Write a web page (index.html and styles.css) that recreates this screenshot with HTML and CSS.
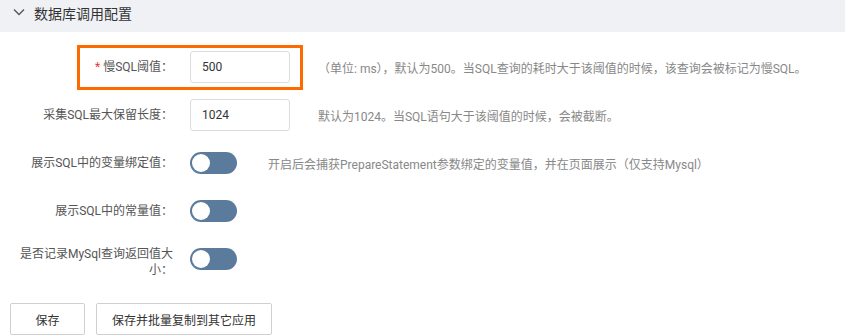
FILE: index.html
```html
<!DOCTYPE html>
<html lang="zh-CN">
<head>
<meta charset="utf-8">
<link rel="stylesheet" href="styles.css">
</head>
<body>
<div class="panel">
  <div class="panel-head">
    <svg class="chevron" width="12" height="8" viewBox="0 0 12 8"><path d="M1 1.5 L6 6.5 L11 1.5" fill="none" stroke="#555" stroke-width="1.3"/></svg>
    <span class="title">数据库调用配置</span>
  </div>
  <div class="form">
    <div class="row">
      <span class="highlight"></span>
      <label class="label"><span class="req">*</span> 慢SQL阈值：</label>
      <div class="control"><input class="input" value="500"></div>
      <span class="desc">（单位: ms），默认为500。当SQL查询的耗时大于该阈值的时候，该查询会被标记为慢SQL。</span>
    </div>
    <div class="row">
      <label class="label">采集SQL最大保留长度：</label>
      <div class="control"><input class="input" value="1024"></div>
      <span class="desc">默认为1024。当SQL语句大于该阈值的时候，会被截断。</span>
    </div>
    <div class="row">
      <label class="label">展示SQL中的变量绑定值：</label>
      <div class="control"><span class="switch"><span class="knob"></span></span></div>
      <span class="desc desc-switch">开启后会捕获PrepareStatement参数绑定的变量值，并在页面展示（仅支持Mysql）</span>
    </div>
    <div class="row">
      <label class="label">展示SQL中的常量值：</label>
      <div class="control"><span class="switch"><span class="knob"></span></span></div>
    </div>
    <div class="row">
      <label class="label label-wrap">是否记录MySql查询返回值大小：</label>
      <div class="control"><span class="switch"><span class="knob"></span></span></div>
    </div>
  </div>
  <div class="actions">
    <button class="btn btn-save">保存</button>
    <button class="btn">保存并批量复制到其它应用</button>
  </div>
</div>
</body>
</html>
```
FILE: styles.css
```css
* { box-sizing: border-box; }
html, body { margin: 0; padding: 0; background: #fff; }
body {
  font-family: Roboto, "Noto Sans CJK SC", sans-serif;
  font-size: 12px;
  color: #555;
  width: 845px;
  height: 335px;
  overflow: hidden;
}
.panel-head {
  height: 32px;
  background: #eff1f5;
  display: flex;
  align-items: flex-start;
  padding: 5px 0 0 13px;
}
.chevron { margin-top: 3px; }
.title {
  margin-left: 9px;
  font-size: 14px;
  line-height: 18px;
  color: #333;
}
.form { padding-top: 19px; }
.row {
  position: relative;
  display: flex;
  align-items: center;
  height: 32px;
  margin-bottom: 16px;
}
.highlight {
  position: absolute;
  left: 77px;
  top: -6px;
  width: 226px;
  height: 45px;
  border: 3px solid #ff6a00;
}
.label {
  flex-shrink: 0;
  width: 158px;
  margin-left: 15px;
  text-align: right;
  line-height: 16px;
  color: #555;
}
.label-wrap { align-self: flex-start; padding-top: 3px; }
.req { color: #e4393c; }
.control { margin-left: 17px; display: flex; align-items: center; }
.input {
  width: 100px;
  height: 32px;
  border: 1px solid #dcdcdc;
  border-radius: 3px;
  padding: 0 11px;
  font-family: Roboto, "Noto Sans CJK SC", sans-serif;
  font-size: 12px;
  color: #333;
  background: #fff;
  outline: none;
}
.switch {
  position: relative;
  display: block;
  width: 47px;
  height: 22px;
  border-radius: 11px;
  background: #5b7b9c;
}
.knob {
  position: absolute;
  left: 2px;
  top: 2px;
  width: 18px;
  height: 18px;
  border-radius: 50%;
  background: #fff;
}
.desc {
  margin-left: 28px;
  color: #888;
  white-space: nowrap;
}
.desc-switch { margin-left: 31px; }
.actions {
  display: flex;
  gap: 11px;
  padding: 12px 0 0 10px;
}
.btn {
  height: 32px;
  padding: 0 15px;
  border: 1px solid #d0d0d0;
  border-radius: 2px;
  background: #fff;
  font-family: Roboto, "Noto Sans CJK SC", sans-serif;
  font-size: 12px;
  color: #333;
}
.btn-save { width: 75px; padding: 0; }
```
